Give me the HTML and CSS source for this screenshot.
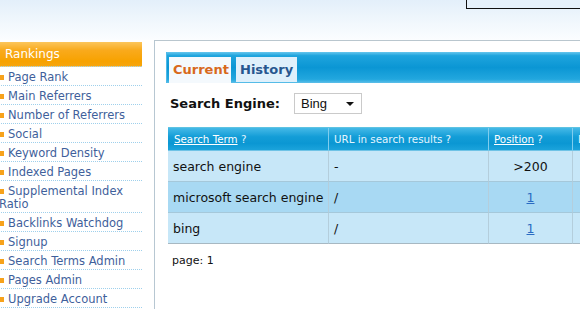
FILE: index.html
```html
<!DOCTYPE html>
<html lang="en">
<head>
    <meta charset="UTF-8">
    <title>Search Terms</title>
    <link rel="stylesheet" href="styles.css">
</head>
<body>
    <div class="top">
        <div class="login"></div>
    </div>
    <div class="main">
        <div class="sidebar">
            <div class="side-head">Rankings</div>
            <ul class="menu">
                <li><a href="#">Page Rank</a></li>
                <li><a href="#">Main Referrers</a></li>
                <li><a href="#">Number of Referrers</a></li>
                <li><a href="#">Social</a></li>
                <li><a href="#">Keyword Density</a></li>
                <li><a href="#">Indexed Pages</a></li>
                <li><a href="#">Supplemental Index Ratio</a></li>
                <li><a href="#">Backlinks Watchdog</a></li>
                <li><a href="#">Signup</a></li>
                <li><a href="#">Search Terms Admin</a></li>
                <li><a href="#">Pages Admin</a></li>
                <li><a href="#">Upgrade Account</a></li>
            </ul>
        </div>
        <div class="content">
            <div class="tabs">
                <span class="tab active">Current</span>
                <span class="tab">History</span>
            </div>
            <div class="engine">
                <span class="engine-label">Search Engine:</span>
                <div class="select">Bing<span class="arrow"></span></div>
            </div>
            <table class="results">
                <thead>
                    <tr>
                        <th class="c1"><a href="#">Search Term</a> ?</th>
                        <th class="c2">URL in search results ?</th>
                        <th class="c3"><a href="#">Position</a> ?</th>
                        <th class="c4">Date ?</th>
                    </tr>
                </thead>
                <tbody>
                    <tr>
                        <td>search engine</td>
                        <td>-</td>
                        <td class="pos">&gt;200</td>
                        <td></td>
                    </tr>
                    <tr class="hl">
                        <td>microsoft search engine</td>
                        <td>/</td>
                        <td class="pos"><a href="#">1</a></td>
                        <td></td>
                    </tr>
                    <tr>
                        <td>bing</td>
                        <td>/</td>
                        <td class="pos"><a href="#">1</a></td>
                        <td></td>
                    </tr>
                </tbody>
            </table>
            <p class="pager">page: 1</p>
        </div>
    </div>
</body>
</html>
```

FILE: styles.css
```css
html, body {
    overflow: hidden;
}
body {
    margin: 0;
    font-family: "DejaVu Sans", Verdana, sans-serif;
    background: #fff;
}
.top {
    display: flex;
    height: 40px;
    background: linear-gradient(#e3effa, #f2f8fd 60%, #fbfdff);
}
.login {
    margin-left: auto;
    width: 113px;
    height: 8px;
    border-left: 1px solid #111;
    border-bottom: 1px solid #111;
    background: #e6f1fb;
}
.main {
    display: flex;
    height: 269px;
}
.sidebar {
    width: 143px;
    margin-left: -1px;
    padding-top: 2px;
    flex: none;
}
.side-head {
    height: 24px;
    line-height: 24px;
    padding-left: 6px;
    color: #fff;
    font-size: 12px;
    background: linear-gradient(#fcc65c, #f9aa1c 35%, #f7a200 80%, #f6a50e);
    border-bottom: 1px dotted #9fd0ec;
}
.menu {
    list-style: none;
    margin: 0;
    padding: 0;
}
.menu li {
    font-size: 11.5px;
    line-height: 13px;
    padding: 4px 0 1px;
    border-bottom: 1px dotted #9fd0ec;
}
.menu li::before {
    content: "";
    display: inline-block;
    width: 5px;
    height: 5px;
    margin-right: 4px;
    background: #f7a21b;
    vertical-align: 1px;
}
.menu a {
    color: #3f5f9b;
    text-decoration: none;
}
.content {
    flex: 1;
    min-width: 0;
    margin-left: 12px;
    border-left: 1px solid #b7c7d2;
    border-top: 1px solid #b9c6ce;
    padding: 11px 0 0 11px;
}
.tabs {
    display: flex;
    align-items: flex-end;
    height: 31px;
    padding-left: 2px;
    box-sizing: border-box;
    background: linear-gradient(#66c6ee, #1ea4dd 12%, #0b96d4 50%, #22a7de 88%, #5dbfe9);
    border-left: 1px solid #4db9e8;
}
.tab {
    height: 26px;
    line-height: 26px;
    padding: 0 4px;
    font-size: 13px;
    font-weight: bold;
}
.tab.active {
    width: 54px;
    background: #f4f9fd;
    color: #d8691c;
}
.tab + .tab {
    margin-left: 5px;
    width: 53px;
    height: 25px;
    margin-bottom: 1px;
    background: #dff0fb;
    color: #27578f;
}
.engine {
    display: flex;
    align-items: center;
    margin: 10px 0 13px 4px;
}
.engine-label {
    width: 124px;
    font-size: 13px;
    font-weight: bold;
    color: #111;
}
.select {
    position: relative;
    width: 60px;
    height: 19px;
    line-height: 19px;
    padding-left: 6px;
    border: 1px solid #cacaca;
    background: #fff;
    font-family: "Liberation Sans", Arial, sans-serif;
    font-size: 13px;
    color: #111;
}
.arrow {
    position: absolute;
    right: 7px;
    top: 8px;
    border-left: 4px solid transparent;
    border-right: 4px solid transparent;
    border-top: 4px solid #111;
}
.results {
    margin-left: 2px;
    width: 504px;
    table-layout: fixed;
    border-collapse: separate;
    border-spacing: 0;
    border-top: 1px solid #5ec3e2;
}
.results th {
    height: 22px;
    padding: 0 0 0 5px;
    text-align: left;
    font-size: 10.3px;
    font-weight: normal;
    color: #e4f5ff;
    background: linear-gradient(#45b9e7, #139dd7 40%, #0b97d3 70%, #1ba3db);
    border-right: 1px solid #7fcdee;
    border-bottom: 1px solid #6fc3e6;
}
.results th a {
    color: #fff;
}
.results th.c1 {
    width: 154px;
    padding-left: 6px;
}
.results th.c2 {
    width: 154px;
}
.results th.c3 {
    width: 78px;
}
.results td {
    height: 30px;
    padding: 0 0 0 5px;
    font-size: 12.5px;
    color: #111;
    background: #c7e7f8;
    border-right: 1px solid #b4cedc;
    border-bottom: 1px solid #a5c8da;
}
.results tr.hl td {
    background: #a8d9f3;
}
.results tbody tr:last-child td {
    border-bottom-color: #a7b8c2;
}
.results td.pos {
    text-align: center;
    padding-left: 0;
}
.results td a {
    color: #2a6bc2;
}
.pager {
    margin: 10px 0 0 6px;
    font-size: 11px;
    color: #111;
}
```
